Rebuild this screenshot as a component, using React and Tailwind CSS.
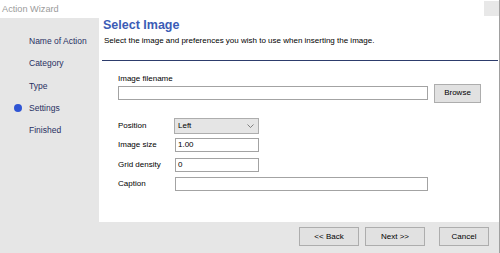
import React from "react";

const font = { fontFamily: '"Liberation Sans", Arial, sans-serif' };

function SideItem({ label, active }) {
  return (
    <div className="flex items-center h-[22.25px]">
      <div className="w-[29px] flex items-center">
        {active && <span className="w-[8px] h-[8px] rounded-full bg-[#2f55d4] ml-[14px]" />}
      </div>
      <span className="text-[8.5px] leading-[10px] text-[#283063] whitespace-nowrap">{label}</span>
    </div>
  );
}

function Field({ label, children }) {
  return (
    <div className="flex items-center h-[19.5px]">
      <span className="w-[57px] text-[8px] leading-[10px] text-black whitespace-nowrap">{label}</span>
      {children}
    </div>
  );
}

function TextBox({ value, className }) {
  return (
    <div className={`h-[14px] border border-[#a3a3a3] bg-white text-[8px] leading-[12px] px-[2px] ${className}`}>
      {value}
    </div>
  );
}

function Btn({ label, className }) {
  return (
    <div className={`h-[19px] border border-[#adadad] bg-[#e1e1e1] text-[8px] leading-[10px] flex items-center justify-center text-black whitespace-nowrap ${className}`}>
      {label}
    </div>
  );
}

export default function App() {
  return (
    <div className="w-[500px] h-[253px] flex flex-col bg-white border-r border-[#a0a0a0] overflow-hidden" style={font}>
      {/* title bar */}
      <div className="h-[18px] flex items-start justify-between">
        <span className="text-[9.2px] text-[#9b9b9b] pl-[2px] pt-[4px] leading-[10px]">Action Wizard</span>
        <div className="w-[15px] h-[15px] bg-[#e8e8e8] mt-[1px]" />
      </div>

      <div className="flex-1 flex bg-[#e6e6e6]">
        {/* steps */}
        <div className="w-[99px] pt-[12px] flex flex-col">
          <SideItem label="Name of Action" />
          <SideItem label="Category" />
          <SideItem label="Type" />
          <SideItem label="Settings" active />
          <SideItem label="Finished" />
        </div>

        <div className="flex-1 flex flex-col">
          {/* page */}
          <div className="h-[204px] bg-white pr-[1px]">
            <div className="pl-[4px] text-[12.5px] font-bold text-[#3b5cb6] leading-[14px]">Select Image</div>
            <div className="pl-[5px] text-[8px] text-black leading-[10px] mt-[4px] whitespace-nowrap">
              Select the image and preferences you wish to use when inserting the image.
            </div>
            <div className="h-[1px] bg-[#2d3c6c] mt-[14px] ml-[3px]" />

            <div className="pl-[19px] pt-[13px]">
              <div className="text-[8px] leading-[10px]">Image filename</div>
              <div className="flex items-center mt-[1px] h-[16px]">
                <TextBox value="" className="w-[310px]" />
                <Btn label="Browse" className="w-[47px] ml-[6px] h-[16px]" />
              </div>

              <div className="flex flex-col mt-[15px]">
                <Field label="Position">
                  <div className="w-[85px] h-[16px] ml-[-1px] border border-[#adadad] bg-[#e5e5e5] text-[8px] flex items-center justify-between pl-[3px] pr-[4px]">
                    <span>Left</span>
                    <svg width="7" height="4" viewBox="0 0 7 4">
                      <path d="M0.5 0.5 L3.5 3.5 L6.5 0.5" fill="none" stroke="#666" strokeWidth="0.8" />
                    </svg>
                  </div>
                </Field>
                <Field label="Image size">
                  <TextBox value="1.00" className="w-[84px]" />
                </Field>
                <Field label="Grid density">
                  <TextBox value="0" className="w-[84px]" />
                </Field>
                <Field label="Caption">
                  <TextBox value="" className="w-[253px]" />
                </Field>
              </div>
            </div>
          </div>

          {/* buttons */}
          <div className="flex-1 flex items-start pt-[5px] pl-[200px]">
            <Btn label="<< Back" className="w-[60px]" />
            <Btn label="Next >>" className="w-[60px] ml-[6px]" />
            <Btn label="Cancel" className="w-[50px] ml-[14px]" />
          </div>
        </div>
      </div>
    </div>
  );
}
